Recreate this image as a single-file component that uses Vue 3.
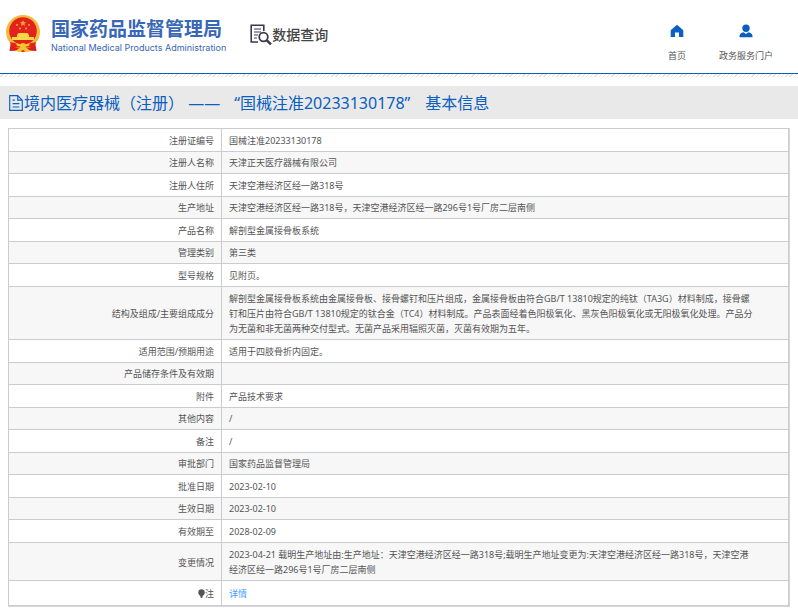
<template>
  <div class="page">
    <header class="header">
      <a href="#" class="brand">
        <svg class="emblem" viewBox="0 0 36 40">
          <path d="M6 27 L4.5 37 Q12 36 18 38 Q24 36 31.5 37 L30 27 Z" fill="#d9201c" />
          <circle cx="18" cy="18" r="17" fill="#f0bd3a" />
          <circle cx="18" cy="17" r="13.8" fill="#e3231b" />
          <path d="M18 6 l.9 2.2 2.4.1-1.9 1.5.7 2.3-2.1-1.3-2.1 1.3.7-2.3-1.9-1.5 2.4-.1z" fill="#f5a93c" />
          <circle cx="12" cy="11" r="1" fill="#f5a93c" />
          <circle cx="24" cy="11" r="1" fill="#f5a93c" />
          <circle cx="15" cy="14.5" r="1" fill="#f5a93c" />
          <circle cx="21" cy="14.5" r="1" fill="#f5a93c" />
          <path d="M12 21 L13.5 19 H22.5 L24 21 V23 H29 V26 H7 V23 H12 Z" fill="#f9d548" />
          <path d="M5 28 Q18 32 31 28 L29 33 Q18 34 7 33 Z" fill="#e3231b" />
          <path d="M11 29 L18 31 L25 29 L24 32 L18 33 L12 32 Z" fill="#f5c52c" />
          <circle cx="18" cy="32" r="3" fill="#f5c52c" />
          <path d="M10 37 L15 34 H21 L26 37 L22 38 L18 36 L14 38 Z" fill="#f5c52c" />
        </svg>
        <span class="brand-text">
          <span class="brand-cn">国家药品监督管理局</span>
          <span class="brand-en">National Medical Products Administration</span>
        </span>
      </a>
      <div class="query">
        <svg class="query-icon" viewBox="0 0 22 22" fill="none" stroke="#3d3a4d">
          <path d="M8 18 H1.2 V1.2 H13.8 V7" stroke-width="1.6" />
          <path d="M4 5 H11 M4 8 H11 M4 11 H8 M4 14 H7" stroke-width="1.2" />
          <circle cx="13.5" cy="13" r="4.3" stroke-width="1.8" />
          <path d="M16.8 16.4 L21 20.4" stroke-width="2.6" />
        </svg>
        <span>数据查询</span>
      </div>
      <nav class="nav">
        <a href="#" class="nav-item">
          <svg class="nav-icon" viewBox="0 0 14 14" fill="#0a5fc0">
            <path d="M7 .8 L13.3 6.3 V13 H9 V8.6 H5 V13 H.7 V6.3 Z" />
          </svg>
          <span>首页</span>
        </a>
        <a href="#" class="nav-item">
          <svg class="nav-icon" viewBox="0 0 14 14" fill="#0a5fc0">
            <circle cx="7" cy="4.2" r="3.7" />
            <path d="M.5 13.3 V12 Q1 9 4.5 8.3 L7 10 L9.5 8.3 Q13 9 13.5 12 V13.3 Z" />
          </svg>
          <span>政务服务门户</span>
        </a>
      </nav>
    </header>
    <div class="hatch"></div>

    <h1 class="title">
      <svg class="title-icon" viewBox="0 0 14 14" fill="none" stroke="#0a5fc0">
        <path d="M1.5 .5 H8.5 L12.5 4.5 V13.5 H1.5 Z M8.5 .5 V4.5 H12.5 M4 4.5 H6 M4 7.5 H10 M4 10.5 H10" />
      </svg>
      <span>境内医疗器械（注册） ——<span class="quote">“</span>国械注准20233130178”<span class="tail">基本信息</span></span>
    </h1>

    <div class="table-wrap">
      <table class="info">
        <tbody>
          <tr v-for="row in rows" :key="row.label" :class="{ long: row.long }">
            <th scope="row">{{ row.label }}</th>
            <td>{{ row.value }}</td>
          </tr>
          <tr class="note">
            <th scope="row">
              <svg class="note-icon" viewBox="0 0 7 9" fill="#555">
                <circle cx="3.5" cy="3.5" r="3.2" />
                <path d="M2 6 H5 L4.2 9 H2.8 Z" />
              </svg>注
            </th>
            <td><a href="#" class="detail">详情</a></td>
          </tr>
        </tbody>
      </table>
    </div>
  </div>
</template>

<script setup>
const rows = [
  { label: '注册证编号', value: '国械注准20233130178' },
  { label: '注册人名称', value: '天津正天医疗器械有限公司' },
  { label: '注册人住所', value: '天津空港经济区经一路318号' },
  { label: '生产地址', value: '天津空港经济区经一路318号，天津空港经济区经一路296号1号厂房二层南侧' },
  { label: '产品名称', value: '解剖型金属接骨板系统' },
  { label: '管理类别', value: '第三类' },
  { label: '型号规格', value: '见附页。' },
  {
    label: '结构及组成/主要组成成分',
    value: '解剖型金属接骨板系统由金属接骨板、接骨螺钉和压片组成，金属接骨板由符合GB/T 13810规定的纯钛（TA3G）材料制成，接骨螺钉和压片由符合GB/T 13810规定的钛合金（TC4）材料制成。产品表面经着色阳极氧化、黑灰色阳极氧化或无阳极氧化处理。产品分为无菌和非无菌两种交付型式。无菌产品采用辐照灭菌，灭菌有效期为五年。',
    long: true
  },
  { label: '适用范围/预期用途', value: '适用于四肢骨折内固定。' },
  { label: '产品储存条件及有效期', value: '' },
  { label: '附件', value: '产品技术要求' },
  { label: '其他内容', value: '/' },
  { label: '备注', value: '/' },
  { label: '审批部门', value: '国家药品监督管理局' },
  { label: '批准日期', value: '2023-02-10' },
  { label: '生效日期', value: '2023-02-10' },
  { label: '有效期至', value: '2028-02-09' },
  {
    label: '变更情况',
    value: '2023-04-21 载明生产地址由:生产地址：天津空港经济区经一路318号;载明生产地址变更为:天津空港经济区经一路318号，天津空港经济区经一路296号1号厂房二层南侧',
    long: true
  }
]
</script>

<style>
body {
  background: #fff;
}
</style>

<style scoped>
.page {
  font-family: 'Noto Sans', 'Noto Sans CJK SC', sans-serif;
  color: #555;
}

a {
  color: inherit;
  text-decoration: none;
}

.header {
  display: flex;
  align-items: flex-start;
  height: 73px;
  border-bottom: 1px solid #0a5fc0;
}

.brand {
  display: flex;
  gap: 10px;
  padding: 14px 0 0 5px;
}

.emblem {
  width: 36px;
  height: 40px;
}

.brand-text {
  display: flex;
  flex-direction: column;
  padding-top: 4px;
  color: #3767b5;
  white-space: nowrap;
}

.brand-cn {
  font-size: 19px;
  line-height: 23px;
  font-weight: 700;
}

.brand-en {
  font-family: Inter, 'Liberation Sans', sans-serif;
  font-size: 9px;
  line-height: 14px;
}

.query {
  display: flex;
  align-items: center;
  margin: 24px 0 0 24px;
  font-size: 14px;
  line-height: 22px;
  font-weight: 500;
  color: #444;
  white-space: nowrap;
}

.query-icon {
  width: 22px;
  height: 22px;
}

.nav {
  display: flex;
  gap: 33px;
  margin-left: auto;
  padding: 24px 25px 0 0;
}

.nav-item {
  display: flex;
  flex-direction: column;
  align-items: center;
  gap: 10px;
  font-size: 9px;
  line-height: 15px;
}

.nav-icon {
  width: 14px;
  height: 14px;
}

.hatch {
  height: 3px;
  margin-bottom: 9px;
  background: repeating-linear-gradient(135deg, #fff 0 2px, #e4e4e4 2px 3px);
}

.title {
  display: flex;
  align-items: center;
  height: 33px;
  margin: 0;
  padding-left: 8px;
  background: #e9e9e9;
  color: #0a5fc0;
  font-size: 16px;
  line-height: 22px;
  font-weight: 400;
  white-space: nowrap;
}

.title-icon {
  width: 16px;
  height: 16px;
}

.quote {
  margin-left: 14px;
}

.tail {
  margin-left: 15px;
}

.table-wrap {
  margin: 9px 8px 8px;
  border-right: 1px solid #d5d5dd;
  border-bottom: 1px solid #d5d5dd;
}

.info {
  width: 100%;
  border-collapse: collapse;
  table-layout: fixed;
  font-size: 9px;
  line-height: 15px;
}

.info th,
.info td {
  padding: 3px 7px;
  border: 1px solid #ccc;
  font-weight: 400;
}

.info th {
  width: 198px;
  text-align: right;
}

.info td {
  padding-right: 34px;
}

.info tr {
  height: 23px;
}

.info tr:nth-child(even) {
  height: 22px;
  background: #f7f7f7;
}

.info tr.long th,
.info tr.long td {
  padding-top: 4px;
}

.info tr.note {
  height: 25px;
}

.note-icon {
  width: 7px;
  height: 9px;
  vertical-align: -1px;
}

.detail {
  color: #409eff;
}
</style>
